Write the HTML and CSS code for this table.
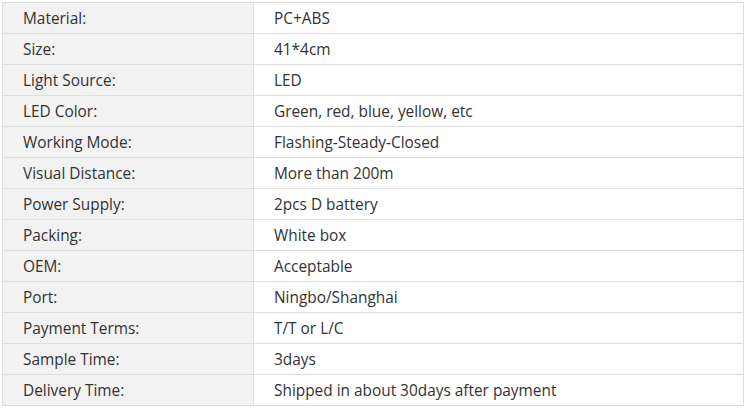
FILE: index.html
```
<!DOCTYPE html>
<html>
<head>
<meta charset="utf-8">
<link rel="stylesheet" href="styles.css">
</head>
<body>
<div class="wrap">
<table class="spec">
<tbody>
<tr><td class="k">Material:</td><td class="v">PC+ABS</td></tr>
<tr><td class="k">Size:</td><td class="v">41*4cm</td></tr>
<tr><td class="k">Light Source:</td><td class="v">LED</td></tr>
<tr><td class="k">LED Color:</td><td class="v">Green, red, blue, yellow, etc</td></tr>
<tr><td class="k">Working Mode:</td><td class="v">Flashing-Steady-Closed</td></tr>
<tr><td class="k">Visual Distance:</td><td class="v">More than 200m</td></tr>
<tr><td class="k">Power Supply:</td><td class="v">2pcs D battery</td></tr>
<tr><td class="k">Packing:</td><td class="v">White box</td></tr>
<tr><td class="k">OEM:</td><td class="v">Acceptable</td></tr>
<tr><td class="k">Port:</td><td class="v">Ningbo/Shanghai</td></tr>
<tr><td class="k">Payment Terms:</td><td class="v">T/T or L/C</td></tr>
<tr><td class="k">Sample Time:</td><td class="v">3days</td></tr>
<tr><td class="k">Delivery Time:</td><td class="v">Shipped in about 30days after payment</td></tr>
</tbody>
</table>
</div>
</body>
</html>
```
FILE: styles.css
```
html, body {
  margin: 0;
  padding: 0;
  background: #ffffff;
}
.wrap {
  padding: 2px;
}
.spec {
  border-collapse: collapse;
  width: 742px;
  table-layout: fixed;
  font-family: "Open Sans", "Noto Sans", sans-serif;
  font-size: 15.4px;
  color: #333333;
}
.spec td {
  border: 1px solid #dddddd;
  height: 31px;
  padding: 2px 0 0 20px;
  box-sizing: border-box;
  vertical-align: middle;
  line-height: 20px;
}
.spec td.k {
  width: 251px;
  background: #f2f2f2;
}
.spec td.v {
  background: #ffffff;
}
```
